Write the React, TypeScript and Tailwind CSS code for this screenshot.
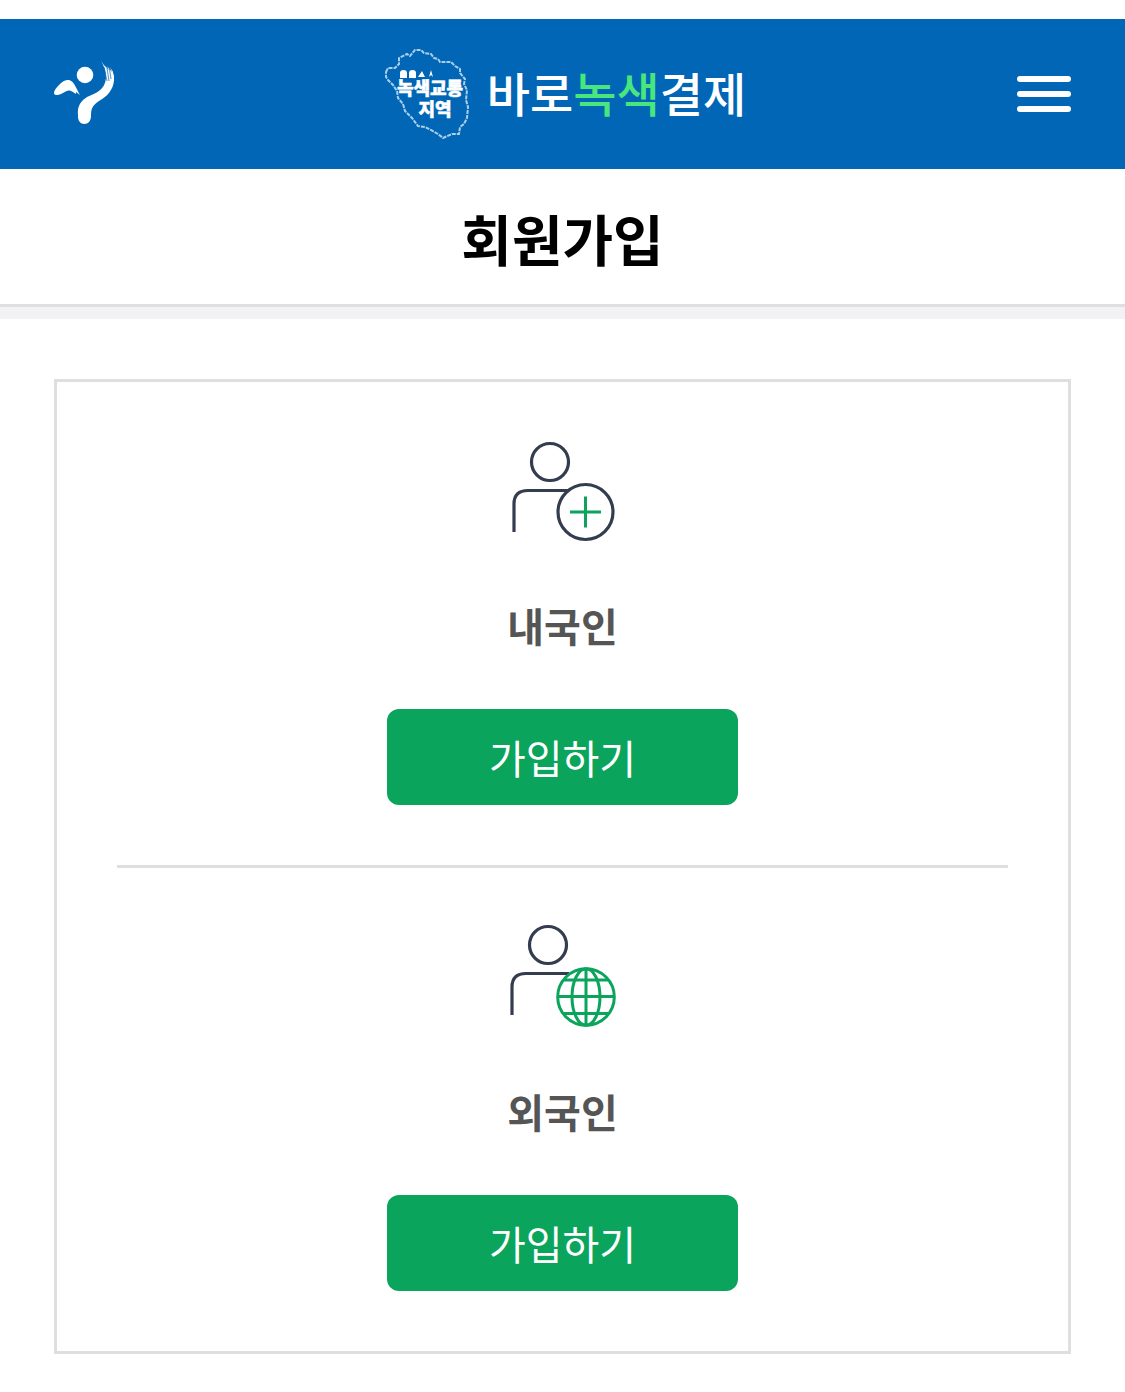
import React from 'react';

interface JoinOption {
  id: string;
  label: string;
  icon: React.ReactNode;
}

const PersonOutline: React.FC<{ headX: number; headY: number; bodyLeft: number }> = ({ headX, headY, bodyLeft }) => (
  <g stroke="#343d4f" strokeWidth="3.2">
    <circle cx={headX} cy={headY} r="18.5" />
    <path d={`M${bodyLeft} ${headY + 70}V${headY + 42}Q${bodyLeft} ${headY + 28.5} ${bodyLeft + 14} ${headY + 28.5}H${bodyLeft + 57}`} />
  </g>
);

const PersonPlusIcon = () => (
  <svg viewBox="0 0 105 102" className="w-[105px] h-[102px] overflow-visible" fill="none" aria-hidden="true">
    <PersonOutline headX={40} headY={23} bodyLeft={4} />
    <circle cx="75.5" cy="73" r="27.5" fill="#fff" stroke="#343d4f" strokeWidth="3.2" />
    <path d="M60 73H91M75.5 57.5V88.5" stroke="#0ba45c" strokeWidth="3" />
  </svg>
);

const PersonGlobeIcon = () => (
  <svg viewBox="0 0 105 102" className="w-[105px] h-[102px] overflow-visible" fill="none" aria-hidden="true">
    <PersonOutline headX={38} headY={20} bodyLeft={2} />
    <g stroke="#0ba45c" strokeWidth="3">
      <circle cx="76" cy="72" r="28.3" fill="#fff" />
      <ellipse cx="76" cy="72" rx="14" ry="28.3" />
      <path d="M76 43.5V100.5M47.5 71.5H104.5M54 55H98M54 88.5H98" />
    </g>
  </svg>
);

const SeoulMark = () => (
  <svg viewBox="0 0 60 66" className="w-[60px] h-[66px]" fill="#fff" aria-hidden="true">
    <circle cx="31" cy="14" r="8.3" />
    <path d="M0 32C0 29 3 26 6 23C9 20 12 18.5 15 19C20 20 22 27 26 34L22 31L22 33L19 31L17 30C12 28 9 34 3 34C1 34 0 33.5 0 32Z" />
    <path d="M47 0L52 7L50 4L55 9L53 5L58 11L56 6L59 11L58 8L60 15C61 27 54 35 45 40C39 44 37 47 37 55C37 60 34 63 30.5 63C26 63 23.5 59 24 54C23 45 27 40 33 36C42 32 51 29 52 17C52 10 50 5 47 0Z" />
    <path d="M50 6L53 20M53 7L55 20M55.5 8L57 18" stroke="#0066b5" strokeWidth="0.7" fill="none" />
  </svg>
);

const ZoneMark = () => (
  <svg viewBox="0 0 84 92" className="w-[84px] h-[92px]" fill="none" aria-hidden="true">
    <path
      d="M1 24L3 20L10 20L14 16L14 10L22 6L25 8L30 2L36 2L39 5L46 6L49 10L53 11L55 14L66 14L70 18L75 21L75 25L80 31L79 36L82 42L81 52L83 59L82 70L79 76L75 79L74 86L67 86L58 90L53 86L46 82L40 79L33 78L27 70L20 63L18 56L13 50L12 43L8 37L3 32L1 29Z"
      stroke="#a9cfea"
      strokeWidth="2"
      strokeDasharray="4 1"
    />
    <path d="M15 30V25Q15 22 18.500 22Q22 22 22 25V30ZM24 30V25Q24 22 27.500 22Q31 22 31 25V30ZM33 29L37 23L40 29ZM44 29L46 22L48 29L46 27Z" fill="#fff" />
    <text fill="#fff" stroke="#fff" strokeWidth="0.5" textAnchor="middle" fontWeight="900" fontSize="18">
      <tspan x="45" y="47">녹색교통</tspan>
      <tspan x="50" y="68">지역</tspan>
    </text>
  </svg>
);

const joinOptions: JoinOption[] = [
  { id: 'domestic', label: '내국인', icon: <PersonPlusIcon /> },
  { id: 'foreign', label: '외국인', icon: <PersonGlobeIcon /> },
];

const Header = () => (
  <header className="mt-[19px] h-[150px] px-[54px] bg-[#0066b5] flex items-center justify-between">
    <a href="#" aria-label="서울특별시" className="w-[60px]">
      <SeoulMark />
    </a>
    <a href="#" className="flex items-center gap-[18px] text-white">
      <ZoneMark />
      <span className="pb-1 text-[47px] leading-[64px] font-medium whitespace-nowrap">
        바로<span className="text-[#49e67e]">녹색</span>결제
      </span>
    </a>
    <button type="button" aria-label="메뉴" className="w-[54px] flex flex-col gap-[9px]">
      <span className="w-full h-[6px] rounded-sm bg-white" />
      <span className="w-full h-[6px] rounded-sm bg-white" />
      <span className="w-full h-[6px] rounded-sm bg-white" />
    </button>
  </header>
);

const JoinCard: React.FC<{ option: JoinOption }> = ({ option }) => (
  <section className="pt-[57px] pb-[60px] flex flex-col items-center border-[#dedfe1] not-first:border-t-[3px]">
    {option.icon}
    <h2 className="mt-[54px] text-[40px] leading-[60px] font-bold text-[#555]">{option.label}</h2>
    <button
      type="button"
      aria-label={`${option.label} 가입하기`}
      className="mt-[54px] w-[351px] h-24 rounded-xl bg-[#0ba45c] text-white text-[40px] leading-[60px] font-normal"
    >
      가입하기
    </button>
  </section>
);

export default function App() {
  return (
    <div className="flow-root bg-white font-['Noto_Sans_CJK_KR',sans-serif]">
      <Header />
      <div className="h-[150px] border-b-[12px] border-[#f2f2f5]">
        <div className="h-full flex items-center justify-center border-b-[3px] border-[#dedfe1]">
          <h1 className="text-[55px] leading-[80px] font-bold text-black">회원가입</h1>
        </div>
      </div>
      <main className="mx-[54px] mt-[60px] mb-[38px] px-[60px] border-[3px] border-[#dedfe1]">
        {joinOptions.map((option) => (
          <JoinCard key={option.id} option={option} />
        ))}
      </main>
    </div>
  );
}
